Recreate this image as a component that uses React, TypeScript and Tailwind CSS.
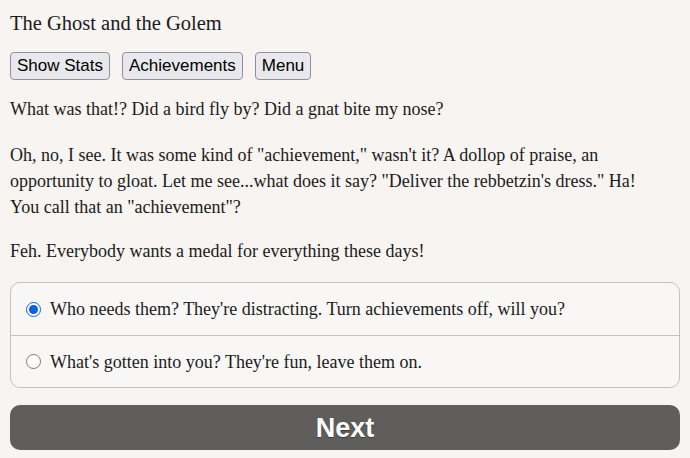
import React, { useState } from 'react';

const choices = [
  "Who needs them? They're distracting. Turn achievements off, will you?",
  "What's gotten into you? They're fun, leave them on.",
];

export default function App() {
  const [selected, setSelected] = useState(0);

  return (
    <div className="min-h-[458px] bg-[#f7f4f1] px-[10px] pt-[10px] text-[#1b1b1b] font-['Liberation_Serif',serif] text-[18px] leading-[26px]">
      <h1 className="text-[20.5px] leading-[26px]">The Ghost and the Golem</h1>

      <div className="mt-[16px] flex gap-[12px] font-['Liberation_Sans',sans-serif] text-[17px] leading-[20px]">
        {['Show Stats', 'Achievements', 'Menu'].map((label) => (
          <button
            key={label}
            className="rounded-[4px] border border-[#8f8f9d] bg-[#e9e9ed] px-[6px] py-[3px] text-black"
          >
            {label}
          </button>
        ))}
      </div>

      <p className="mt-[16px] whitespace-nowrap">What was that!? Did a bird fly by? Did a gnat bite my nose?</p>
      <p className="mt-[20px] whitespace-nowrap">
        Oh, no, I see. It was some kind of "achievement," wasn't it? A dollop of praise, an
        <br />
        opportunity to gloat. Let me see...what does it say? "Deliver the rebbetzin's dress." Ha!
        <br />
        You call that an "achievement"?
      </p>
      <p className="mt-[18px] whitespace-nowrap">Feh. Everybody wants a medal for everything these days!</p>

      <div className="mt-[18px] overflow-hidden rounded-[10px] border border-[#c4c2c0] bg-[#f9f7f5]">
        {choices.map((text, i) => (
          <label
            key={i}
            className={`flex h-[52px] cursor-pointer items-center gap-[9px] px-[15px] ${i > 0 ? 'border-t border-[#c4c2c0]' : ''}`}
          >
            <input
              type="radio"
              name="choice"
              checked={selected === i}
              onChange={() => setSelected(i)}
              className="h-[15px] w-[15px] accent-[#0b62de]"
            />
            <span>{text}</span>
          </label>
        ))}
      </div>

      <button className="mt-[17px] h-[45px] w-full rounded-[10px] bg-[#5f5e5c] font-['Liberation_Sans',sans-serif] text-[27px] font-bold text-white [text-shadow:0_1px_1px_rgba(0,0,0,0.4)]">
        Next
      </button>
    </div>
  );
}
